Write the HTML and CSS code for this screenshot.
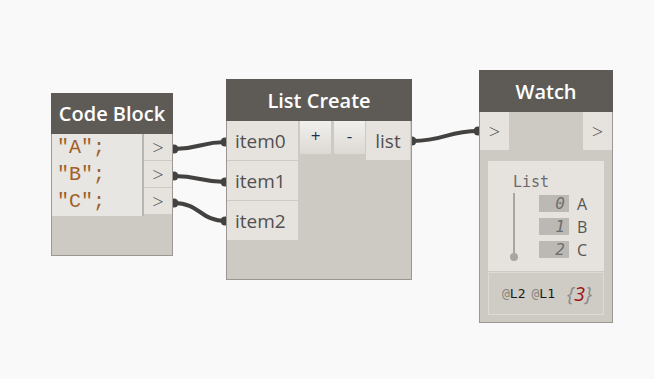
FILE: index.html
```html
<!DOCTYPE html>
<html lang="en">
<head>
    <meta charset="UTF-8">
    <title>Dynamo - Watch</title>
    <link rel="stylesheet" href="styles.css">
</head>
<body>
    <div class="canvas">
        <svg class="wires" width="654" height="379" viewBox="0 0 654 379">
            <g fill="none" stroke="#444240" stroke-width="4" stroke-linecap="round">
                <path d="M174 149 C 200 149, 200 142, 226 142"/>
                <path d="M174 176 C 200 176, 200 182, 226 182"/>
                <path d="M174 203 C 200 203, 200 221, 226 221"/>
                <path d="M412 141 C 446 141, 446 131, 479 131"/>
            </g>
            <g fill="#444240">
                <circle cx="174" cy="149" r="4.5"/>
                <circle cx="174" cy="176" r="4.5"/>
                <circle cx="174" cy="203" r="4.5"/>
                <circle cx="225" cy="142" r="4.5"/>
                <circle cx="225" cy="182" r="4.5"/>
                <circle cx="225" cy="221" r="4.5"/>
                <circle cx="412" cy="141" r="4.5"/>
                <circle cx="478" cy="131" r="4.5"/>
            </g>
        </svg>

        <div class="node code-block">
            <div class="node-head">Code Block</div>
            <div class="code-body">
                <div class="code-text">
                    <div class="code-line">"A";</div>
                    <div class="code-line">"B";</div>
                    <div class="code-line">"C";</div>
                </div>
                <div class="code-ports">
                    <div class="port">&gt;</div>
                    <div class="port">&gt;</div>
                    <div class="port">&gt;</div>
                </div>
            </div>
        </div>

        <div class="node list-create">
            <div class="node-head">List Create</div>
            <div class="lc-body">
                <div class="lc-inputs">
                    <div class="lc-item">item0</div>
                    <div class="lc-item">item1</div>
                    <div class="lc-item">item2</div>
                </div>
                <div class="lc-buttons">
                    <div class="lc-btn">+</div>
                    <div class="lc-btn">-</div>
                </div>
                <div class="lc-output">list</div>
            </div>
        </div>

        <div class="node watch">
            <div class="node-head">Watch</div>
            <div class="watch-ports">
                <div class="watch-port">&gt;</div>
                <div class="watch-port">&gt;</div>
            </div>
            <div class="watch-panel">
                <div class="watch-tree">
                    <div class="tree-title">List</div>
                    <div class="tree-body">
                        <div class="tree-line"></div>
                        <div class="tree-items">
                            <div class="tree-row"><span class="tree-idx">0</span><span class="tree-val">A</span></div>
                            <div class="tree-row"><span class="tree-idx">1</span><span class="tree-val">B</span></div>
                            <div class="tree-row"><span class="tree-idx">2</span><span class="tree-val">C</span></div>
                        </div>
                    </div>
                </div>
                <div class="watch-footer">
                    <span class="lvl"><span class="at">@</span>L2</span>
                    <span class="lvl"><span class="at">@</span>L1</span>
                    <span class="count"><span class="brace">{</span>3<span class="brace">}</span></span>
                </div>
            </div>
        </div>
    </div>
</body>
</html>
```

FILE: styles.css
```css
body {
    margin: 0;
    background-color: #f9f9f9;
    font-family: 'Open Sans', 'Noto Sans', sans-serif;
}
.canvas {
    position: relative;
    width: 654px;
    height: 379px;
    overflow: hidden;
}
.wires {
    position: absolute;
    left: 0;
    top: 0;
}
.node {
    position: absolute;
    background-color: #cdc9c3;
    border: 1px solid #9b9893;
    box-sizing: border-box;
}
.node-head {
    background-color: #5e5b57;
    color: #ffffff;
    font-size: 20px;
    font-weight: 600;
    display: flex;
    align-items: center;
    justify-content: center;
    margin: -1px -1px 0;
}

/* Code Block */
.code-block {
    left: 51px;
    top: 93px;
    width: 122px;
    height: 163px;
}
.code-block .node-head {
    height: 41px;
}
.code-body {
    display: flex;
}
.code-text {
    flex: 1;
    background-color: #e8e6e2;
    border-right: 2px solid #b9b5af;
    padding-left: 5px;
    height: 82px;
}
.code-line {
    height: 27px;
    line-height: 28px;
    font-family: 'Liberation Mono', 'DejaVu Sans Mono', monospace;
    font-size: 20px;
    color: #a0602a;
}
.code-ports {
    width: 28px;
    display: flex;
    flex-direction: column;
    gap: 1px;
}
.port {
    height: 26px;
    background-color: #e6e3df;
    color: #4a4a4a;
    font-size: 20px;
    font-weight: 300;
    display: flex;
    align-items: center;
    justify-content: center;
}

/* List Create */
.list-create {
    left: 226px;
    top: 79px;
    width: 186px;
    height: 201px;
}
.list-create .node-head {
    height: 42px;
}
.lc-body {
    display: flex;
    align-items: flex-start;
}
.lc-inputs {
    width: 71px;
    display: flex;
    flex-direction: column;
    gap: 1px;
}
.lc-item {
    height: 39px;
    background-color: #e6e3df;
    color: #505050;
    font-size: 19px;
    padding-left: 8px;
    display: flex;
    align-items: center;
}
.lc-buttons {
    display: flex;
    gap: 3px;
    margin-left: 2px;
}
.lc-btn {
    width: 31px;
    height: 33px;
    background: linear-gradient(#f2f0ed, #dcd9d4);
    color: #1d2f5a;
    font-size: 17px;
    display: flex;
    justify-content: center;
    padding-top: 3px;
    box-sizing: border-box;
}
.lc-output {
    width: 44px;
    height: 39px;
    margin-left: 1px;
    background-color: #e6e3df;
    color: #505050;
    font-size: 19px;
    display: flex;
    align-items: center;
    justify-content: center;
}

/* Watch */
.watch {
    left: 479px;
    top: 70px;
    width: 134px;
    height: 253px;
}
.watch .node-head {
    height: 42px;
}
.watch-ports {
    display: flex;
    justify-content: space-between;
}
.watch-port {
    width: 29px;
    height: 38px;
    background-color: #e6e3df;
    color: #4a4a4a;
    font-size: 20px;
    font-weight: 300;
    display: flex;
    align-items: center;
    justify-content: center;
}
.watch-panel {
    margin: 11px 8px 0;
}
.watch-tree {
    background-color: #e6e3df;
    height: 110px;
    box-sizing: border-box;
    padding: 13px 0 0 25px;
}
.tree-title {
    font-family: 'DejaVu Sans Mono', 'Liberation Mono', monospace;
    font-size: 15px;
    color: #6a6a6a;
    line-height: 17px;
}
.tree-body {
    display: flex;
}
.tree-line {
    width: 2px;
    height: 64px;
    margin-top: 2px;
    background-color: #a9a6a1;
    position: relative;
}
.tree-line::after {
    content: "";
    position: absolute;
    left: -3px;
    bottom: -4px;
    width: 8px;
    height: 8px;
    border-radius: 50%;
    background-color: #a9a6a1;
}
.tree-items {
    display: flex;
    flex-direction: column;
    gap: 6px;
    margin-left: 24px;
    margin-top: 4px;
}
.tree-row {
    display: flex;
    align-items: center;
    height: 17px;
}
.tree-idx {
    width: 30px;
    height: 17px;
    background-color: #bcb9b4;
    color: #6d6d6d;
    font-family: 'DejaVu Sans Mono', 'Liberation Mono', monospace;
    font-style: italic;
    font-size: 16px;
    line-height: 17px;
    text-align: right;
    padding-right: 4px;
    box-sizing: border-box;
}
.tree-val {
    margin-left: 8px;
    color: #555555;
    font-size: 16px;
}
.watch-footer {
    margin-top: 1px;
    height: 43px;
    background-color: #cfcbc5;
    border: 1px solid #dedbd6;
    box-sizing: border-box;
    display: flex;
    align-items: center;
    padding-left: 13px;
    gap: 6px;
}
.lvl {
    font-family: 'DejaVu Sans Mono', 'Liberation Mono', monospace;
    font-size: 13px;
    color: #1a1a1a;
}
.at {
    color: #8a8580;
}
.count {
    margin-left: 6px;
    font-style: italic;
    font-size: 20px;
    color: #9b1414;
}
.brace {
    color: #8a8a8a;
}
```
